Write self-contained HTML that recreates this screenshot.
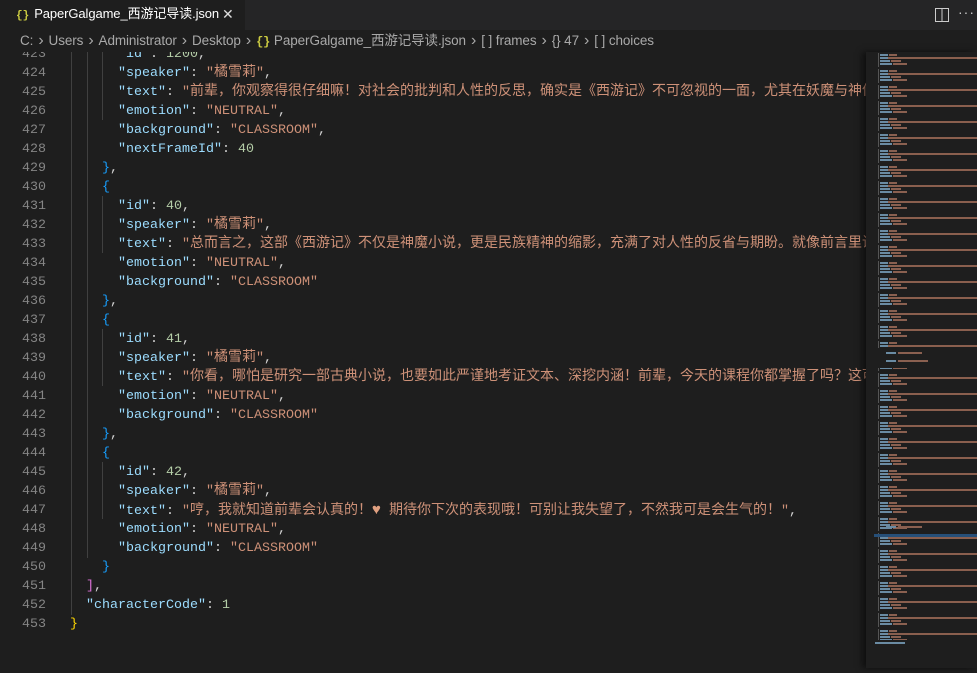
<!DOCTYPE html>
<html><head><meta charset="utf-8"><style>
*{margin:0;padding:0;box-sizing:border-box}
body{width:977px;height:668px;background:#1e1e1e;overflow:hidden;position:relative;font-family:"Liberation Sans","Noto Sans CJK SC",sans-serif}
.tabs{position:absolute;left:0;top:0;width:977px;height:30px;background:#252526}
.tab{position:absolute;left:0;top:0;width:245px;height:30px;background:#1e1e1e;color:#fff;font-size:13px;line-height:28px;padding-left:16px;white-space:nowrap;letter-spacing:-0.1px}
.tab .b{color:#cbcb41;font-family:"Liberation Mono",monospace;font-size:11px;font-weight:bold;margin-right:5px;letter-spacing:0}
.tab .x{position:absolute;left:222px;top:0;color:#ddd;font-size:14px}
.crumb{position:absolute;left:0;top:30px;width:977px;height:22px;background:#1e1e1e;color:#a9a9a9;font-size:13.5px;line-height:22px;padding-left:20px;white-space:nowrap;letter-spacing:-0.1px}
.crumb .s{margin:0 5px;color:#a9a9a9;font-size:16px}
.crumb .b{color:#cbcb41;font-family:"Liberation Mono",monospace;font-size:12px;font-weight:bold}
.ed{position:absolute;left:0;top:52px;width:866px;height:616px;overflow:hidden}
.ln{position:absolute;left:0;top:-7.5px;width:46px;text-align:right;color:#858585;font:13.33px/19px "Liberation Mono",monospace}
.code{position:absolute;left:70px;top:-7.5px;font:13.33px/19px "Liberation Mono",monospace;color:#d4d4d4}
.code div{height:19px;white-space:pre;overflow:visible}
.k{color:#9cdcfe}.s1{color:#ce9178}.n{color:#b5cea8}.bl{color:#179fff}.y{color:#ffd700}.p{color:#da70d6}
.c{font-family:"Noto Sans CJK SC",sans-serif;font-size:14px;line-height:0}
.g{position:absolute;width:1px;background:#404040}
.mm{position:absolute;left:866px;top:52px;width:111px;height:616px;background:#1e1e1e;box-shadow:-4px 0 6px rgba(0,0,0,.5)}
</style></head><body>
<div class="tabs">
<div class="tab"><span class="b">{}</span>PaperGalgame_西游记导读.json<span class="x">✕</span></div>
<svg style="position:absolute;left:935px;top:8px" width="14" height="14"><rect x="0.5" y="0.5" width="13" height="13" fill="none" stroke="#ccc"/><line x1="7" y1="0" x2="7" y2="14" stroke="#ccc"/></svg>
<div style="position:absolute;left:958px;top:4px;color:#ccc;font-size:14px;letter-spacing:1px">···</div>
</div>
<div class="crumb">C:<span class="s">›</span>Users<span class="s">›</span>Administrator<span class="s">›</span>Desktop<span class="s">›</span><span class="b">{}</span> PaperGalgame_西游记导读.json<span class="s">›</span>[ ] frames<span class="s">›</span>{} 47<span class="s">›</span>[ ] choices</div>
<div class="ed">
<div class="g" style="left:71px;top:0;height:563px"></div>
<div class="g" style="left:87px;top:0;height:506px"></div>
<div class="g" style="left:102px;top:0;height:68px"></div>
<div class="g" style="left:102px;top:144px;height:57px"></div>
<div class="g" style="left:102px;top:277px;height:57px"></div>
<div class="g" style="left:102px;top:410px;height:57px"></div>
<div class="ln">423<br>424<br>425<br>426<br>427<br>428<br>429<br>430<br>431<br>432<br>433<br>434<br>435<br>436<br>437<br>438<br>439<br>440<br>441<br>442<br>443<br>444<br>445<br>446<br>447<br>448<br>449<br>450<br>451<br>452<br>453</div>
<div class="code">
<div>      <span class="k">"id"</span>: <span class="n">1200</span>,</div>
<div>      <span class="k">"speaker"</span>: <span class="s1">"<span class="c">橘雪莉</span>"</span>,</div>
<div>      <span class="k">"text"</span>: <span class="s1">"<span class="c">前辈，你观察得很仔细嘛！对社会的批判和人性的反思，确实是《西游记》不可忽视的一面，尤其在妖魔与神仙</span>"</span>,</div>
<div>      <span class="k">"emotion"</span>: <span class="s1">"NEUTRAL"</span>,</div>
<div>      <span class="k">"background"</span>: <span class="s1">"CLASSROOM"</span>,</div>
<div>      <span class="k">"nextFrameId"</span>: <span class="n">40</span></div>
<div>    <span class="bl">}</span>,</div>
<div>    <span class="bl">{</span></div>
<div>      <span class="k">"id"</span>: <span class="n">40</span>,</div>
<div>      <span class="k">"speaker"</span>: <span class="s1">"<span class="c">橘雪莉</span>"</span>,</div>
<div>      <span class="k">"text"</span>: <span class="s1">"<span class="c">总而言之，这部《西游记》不仅是神魔小说，更是民族精神的缩影，充满了对人性的反省与期盼。就像前言里说</span>"</span>,</div>
<div>      <span class="k">"emotion"</span>: <span class="s1">"NEUTRAL"</span>,</div>
<div>      <span class="k">"background"</span>: <span class="s1">"CLASSROOM"</span></div>
<div>    <span class="bl">}</span>,</div>
<div>    <span class="bl">{</span></div>
<div>      <span class="k">"id"</span>: <span class="n">41</span>,</div>
<div>      <span class="k">"speaker"</span>: <span class="s1">"<span class="c">橘雪莉</span>"</span>,</div>
<div>      <span class="k">"text"</span>: <span class="s1">"<span class="c">你看，哪怕是研究一部古典小说，也要如此严谨地考证文本、深挖内涵！前辈，今天的课程你都掌握了吗？这可</span>"</span>,</div>
<div>      <span class="k">"emotion"</span>: <span class="s1">"NEUTRAL"</span>,</div>
<div>      <span class="k">"background"</span>: <span class="s1">"CLASSROOM"</span></div>
<div>    <span class="bl">}</span>,</div>
<div>    <span class="bl">{</span></div>
<div>      <span class="k">"id"</span>: <span class="n">42</span>,</div>
<div>      <span class="k">"speaker"</span>: <span class="s1">"<span class="c">橘雪莉</span>"</span>,</div>
<div>      <span class="k">"text"</span>: <span class="s1">"<span class="c">哼，我就知道前辈会认真的！</span><span style="color:#e0a080;font-size:15px">♥</span> <span class="c">期待你下次的表现哦！可别让我失望了，不然我可是会生气的！</span>"</span>,</div>
<div>      <span class="k">"emotion"</span>: <span class="s1">"NEUTRAL"</span>,</div>
<div>      <span class="k">"background"</span>: <span class="s1">"CLASSROOM"</span></div>
<div>    <span class="bl">}</span></div>
<div>  <span class="p">]</span>,</div>
<div>  <span class="k">"characterCode"</span>: <span class="n">1</span></div>
<div><span class="y">}</span></div>
</div>
</div>
<div class="mm">
<svg width="111" height="616">
<defs><pattern id="pt" x="0" y="0" width="111" height="16" patternUnits="userSpaceOnUse">
<rect x="12" y="1" width="1" height="14" fill="#555"/>
<rect x="14" y="2" width="8" height="2" fill="#6a8ba3"/><rect x="23" y="2" width="8" height="2" fill="#8a6050"/>
<rect x="14" y="5" width="8" height="2" fill="#6a8ba3"/><rect x="22" y="5" width="89" height="2" fill="#8a5f4e"/>
<rect x="14" y="8" width="10" height="2" fill="#6a8ba3"/><rect x="25" y="8" width="10" height="2" fill="#8a6050"/>
<rect x="14" y="11" width="12" height="2" fill="#6a8ba3"/><rect x="27" y="11" width="14" height="2" fill="#8a6050"/>
</pattern></defs>
<rect x="0" y="0" width="111" height="296" fill="url(#pt)"/>
<rect x="20" y="300" width="10" height="2" fill="#6a8ba3"/><rect x="32" y="300" width="24" height="2" fill="#8a6050"/>
<rect x="20" y="308" width="10" height="2" fill="#6a8ba3"/><rect x="32" y="308" width="30" height="2" fill="#8a6050"/>
<rect x="0" y="316" width="111" height="272" fill="url(#pt)"/>
<rect x="20" y="474" width="10" height="2" fill="#6a8ba3"/><rect x="32" y="474" width="24" height="2" fill="#8a6050"/>
<rect x="8" y="482" width="111" height="3" fill="#264f78"/>
<rect x="9" y="590" width="30" height="2" fill="#6a8ba3"/>
</svg>
</div>
</body></html>
